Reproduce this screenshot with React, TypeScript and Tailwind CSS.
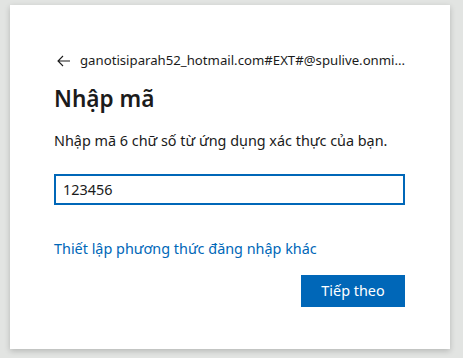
export default function App() {
  return (
    <div className="w-[463px] h-[358px] bg-[#e2e4e2] pt-[5px] pl-[10px] font-['Segoe_UI','Noto_Sans',sans-serif]">
      <div className="w-[440px] h-[344px] bg-white shadow-[0_2px_6px_rgba(0,0,0,0.2)] pt-[46px] pl-[44px] pr-[45px]">
        <div className="flex items-center h-[20px] text-[13.2px] text-[#1b1b1b]">
          <svg width="14" height="12" viewBox="0 0 14 12" className="shrink-0 ml-[3px] mr-[9px]">
            <path d="M6 1 L1 6 L6 11 M1 6 H13" fill="none" stroke="#1b1b1b" strokeWidth="1.1" />
          </svg>
          <span className="whitespace-nowrap">ganotisiparah52_hotmail.com#EXT#@spulive.onmi...</span>
        </div>
        <h1 className="mt-[14px] text-[22.6px] leading-[28px] font-semibold text-[#1b1b1b]">Nhập mã</h1>
        <p className="mt-[18px] text-[14.4px] leading-[20px] text-[#1b1b1b]">
          Nhập mã 6 chữ số từ ứng dụng xác thực của bạn.
        </p>
        <div className="mt-[23px] h-[31px] w-[351px] border-2 border-[#0067b8] flex items-center pl-[7px] text-[14.4px] text-[#1b1b1b]">
          123456
        </div>
        <a className="block mt-[34px] text-[14.4px] leading-[20px] text-[#0067b8]">
          Thiết lập phương thức đăng nhập khác
        </a>
        <div className="flex justify-end mt-[16px] w-[351px]">
          <button className="w-[104px] h-[32px] bg-[#0067b8] text-white text-[14.4px]">Tiếp theo</button>
        </div>
      </div>
    </div>
  );
}
